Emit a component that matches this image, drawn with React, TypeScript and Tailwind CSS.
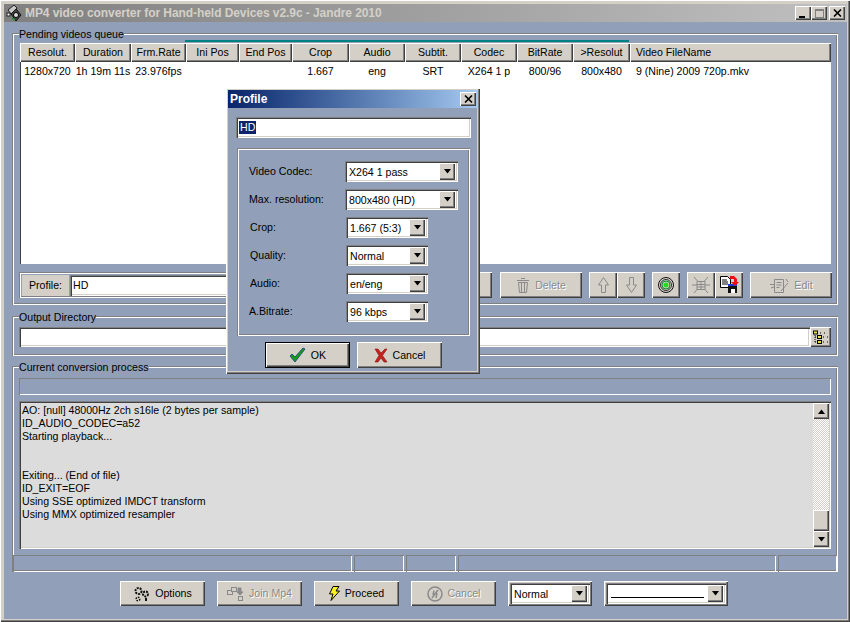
import type { ReactNode } from 'react';

const raised = 'bg-[#d4d0c8] shadow-[inset_1px_1px_0_#fff,inset_-1px_-1px_0_#404040,inset_-2px_-2px_0_#808080]';
const sunken = 'shadow-[inset_1px_1px_0_#808080,inset_2px_2px_0_#404040,inset_-1px_-1px_0_#fff,inset_-2px_-2px_0_#d4d0c8]';
const etched = 'shadow-[inset_1px_1px_0_#808080,inset_2px_2px_0_#fff,inset_-1px_-1px_0_#fff,inset_-2px_-2px_0_#808080]';
const thinPanel = 'shadow-[inset_1px_1px_0_#808080,inset_-1px_-1px_0_#fff]';
const disabledText = 'text-[#8a8a8a] [text-shadow:1px_1px_0_#fff]';

const columns = [
    { title: 'Resolut.', value: '1280x720', cls: 'w-[55px]' },
    { title: 'Duration', value: '1h 19m 11s', cls: 'w-[56px]' },
    { title: 'Frm.Rate', value: '23.976fps', cls: 'w-[55px]' },
    { title: 'Ini Pos', value: '', cls: 'w-[53px]' },
    { title: 'End Pos', value: '', cls: 'w-[53px]' },
    { title: 'Crop', value: '1.667', cls: 'w-[57px]' },
    { title: 'Audio', value: 'eng', cls: 'w-[56px]' },
    { title: 'Subtit.', value: 'SRT', cls: 'w-[56px]' },
    { title: 'Codec', value: 'X264 1 p', cls: 'w-[56px]' },
    { title: 'BitRate', value: '800/96', cls: 'w-[56px]' },
    { title: '>Resolut', value: '800x480', cls: 'w-[57px]' },
];

const logLines = [
    'AO: [null] 48000Hz 2ch s16le (2 bytes per sample)',
    'ID_AUDIO_CODEC=a52',
    'Starting playback...',
    '',
    '',
    'Exiting... (End of file)',
    'ID_EXIT=EOF',
    'Using SSE optimized IMDCT transform',
    'Using MMX optimized resampler',
];

function Arrow({ up }: { up?: boolean }) {
    return (
        <svg width="9" height="5" viewBox="0 0 9 5" className={up ? 'rotate-180' : ''}>
            <polygon points="1,0 8,0 4.5,4.5" fill="#000" />
        </svg>
    );
}

function Group({ label, className, children }: { label: string; className: string; children: ReactNode }) {
    return (
        <div className={`relative ${etched} ${className}`}>
            <span className="absolute left-[7px] -top-[5px] bg-[#919fb8] leading-[13px]">{label}</span>
            {children}
        </div>
    );
}

function Combo({ value, className }: { value: string; className: string }) {
    return (
        <div className={`flex items-center bg-white p-[2px] pr-[3px] ${sunken} ${className}`}>
            <span className="flex-1 pl-[2px] pt-[1px] text-black">{value}</span>
            <span className={`flex h-[17px] w-[16px] items-center justify-center ${raised}`}>
                <Arrow />
            </span>
        </div>
    );
}

function Button({ icon, label, disabled, className }: { icon: ReactNode; label: string; disabled?: boolean; className: string }) {
    return (
        <button className={`flex items-center justify-center gap-[5px] ${raised} ${disabled ? disabledText : 'text-black'} ${className}`}>
            {icon}
            {label}
        </button>
    );
}

function IconButton({ children, className }: { children: ReactNode; className?: string }) {
    return <button className={`flex h-[26px] w-[28px] items-center justify-center ${raised} ${className ?? ''}`}>{children}</button>;
}

function WinButton({ children }: { children: ReactNode }) {
    return <span className={`flex h-[14px] w-[16px] items-center justify-center ${raised}`}>{children}</span>;
}

function CloseGlyph() {
    return (
        <svg width="9" height="8" viewBox="0 0 9 8">
            <path d="M1 .5l7 7M8 .5l-7 7" stroke="#000" strokeWidth="1.600" />
        </svg>
    );
}

function AppIcon() {
    return (
        <svg width="18" height="18" viewBox="0 0 18 18">
            <path d="M3 6l6-5 3 3-6 6z" fill="#c8c8c8" stroke="#222" />
            <path d="M6 10l5-5 5 6-5 6z" fill="#444" stroke="#111" />
            <circle cx="11" cy="11" r="2.5" fill="#ddd" stroke="#000" />
            <rect x="2" y="9" width="3" height="3" fill="#fff" stroke="#222" />
            <path d="M7 14l3 2" stroke="#2a8a3a" strokeWidth="2" />
        </svg>
    );
}

function CheckIcon() {
    return (
        <svg width="17" height="16" viewBox="0 0 17 16">
            <path d="M1 9l2-2 3 3 8-9 2 1-10 13z" fill="#1b9a1b" stroke="#0a3f7a" strokeWidth="0.8" />
        </svg>
    );
}

function CrossIcon() {
    return (
        <svg width="14" height="15" viewBox="0 0 14 15">
            <path d="M1 1h3l3 4 4-4h2L8.500 7.500 13 14h-3L7 10l-3 4H1l4-6.500z" fill="#c8201c" stroke="#7a1410" strokeWidth="0.6" />
        </svg>
    );
}

function TrashIcon() {
    return (
        <svg width="14" height="16" viewBox="0 0 14 16" fill="none" stroke="#8a8a8a">
            <path d="M5 1.500h4M1 3.500h12M2.500 5.500h9l-1 10h-7zM5.500 6v9M8.500 6v9" />
        </svg>
    );
}

function UpDownIcon({ down }: { down?: boolean }) {
    return (
        <svg width="11" height="16" viewBox="0 0 11 16" fill="#d4d0c8" stroke="#8a8a8a" className={down ? 'rotate-180' : ''}>
            <path d="M5.500 .5L10.500 8H7.500v7.500h-4V8h-3z" />
        </svg>
    );
}

function TargetIcon() {
    return (
        <svg width="16" height="16" viewBox="0 0 16 16" fill="none">
            <circle cx="8" cy="8" r="7.500" stroke="#111" />
            <circle cx="8" cy="8" r="5.500" stroke="#333" />
            <circle cx="8" cy="8" r="4" stroke="#0a8a2a" />
            <circle cx="8" cy="8" r="2.500" fill="#22dd22" />
        </svg>
    );
}

function BugIcon() {
    return (
        <svg width="18" height="18" viewBox="0 0 18 18" fill="none" stroke="#8a8a8a">
            <path d="M5 5.500h8v8H5zM5 8.500h8M5 11h8M9 5.500v8M2 1l3.500 4M16 1l-3.500 4M0 9h5M18 9h-5M2 17l3.500-4M16 17l-3.500-4" />
        </svg>
    );
}

function SaveIcon() {
    return (
        <svg width="19" height="18" viewBox="0 0 19 18">
            <path d="M.5 .5h7l3 3v8h-10z" fill="#fff" stroke="#000" />
            <path d="M2 4h5M2 6h6M2 8h6" stroke="#000" />
            <rect x="8" y="9" width="9" height="8" fill="#111" />
            <rect x="8" y="8" width="9" height="2" fill="#1a3ad8" />
            <rect x="11" y="13" width="4" height="4" fill="#fff" />
            <path d="M10 0h4l3 3v3h2l-4 4-4-4h3V3h-4z" fill="#e81010" />
        </svg>
    );
}

function EditIcon() {
    return (
        <svg width="20" height="18" viewBox="0 0 20 18" fill="none" stroke="#8a8a8a">
            <path d="M5.500 3.500h9v13h-9zM7.500 6.500h5M7.500 9h5M7.500 11.500h3M1 8.500h4M2 12l3-1M12 15l7-8M17 3l2 3" />
        </svg>
    );
}

function TreeIcon() {
    return (
        <svg width="15" height="15" viewBox="0 0 15 15" fill="none">
            <path d="M2 3v9M2 7h3M2 12h3M7 3h2M11 3h2M10 7h2M14 7h1M10 12h2M14 12h1" stroke="#000" strokeDasharray="1 1" />
            <rect x=".5" y="1" width="4" height="3" fill="#f0e040" stroke="#000" />
            <rect x="4.500" y="5.500" width="4" height="3" fill="#f0e040" stroke="#000" />
            <rect x="4.500" y="10.500" width="4" height="3" fill="#f0e040" stroke="#000" />
        </svg>
    );
}

function GearsIcon() {
    return (
        <svg width="17" height="16" viewBox="0 0 17 16" fill="none" stroke="#111">
            <circle cx="5.500" cy="5" r="3" strokeWidth="2" strokeDasharray="2 1" />
            <circle cx="12.500" cy="8" r="2.500" strokeWidth="2" strokeDasharray="2 1" />
            <circle cx="5" cy="13" r="1.800" strokeWidth="1.500" strokeDasharray="1.500 1" />
            <path d="M13 12v3" strokeWidth="2" />
        </svg>
    );
}

function JoinIcon() {
    return (
        <svg width="17" height="16" viewBox="0 0 17 16" fill="#d4d0c8" stroke="#8a8a8a">
            <rect x=".5" y="4.500" width="5" height="4" />
            <rect x="4.500" y="1.500" width="5" height="4" />
            <rect x="11.500" y="10.500" width="4" height="4" />
            <path d="M11 2h3v4h2l-3 3-3-3h1z" fill="#8a8a8a" />
        </svg>
    );
}

function BoltIcon() {
    return (
        <svg width="11" height="15" viewBox="0 0 11 15">
            <path d="M4 .5h6L7 5h3.500L2 14.500 4 8H.5z" fill="#f8f020" stroke="#000" />
        </svg>
    );
}

function CancelIcon() {
    return (
        <svg width="16" height="16" viewBox="0 0 16 16" fill="none" stroke="#8a8a8a">
            <circle cx="8" cy="8" r="7" strokeWidth="1.500" />
            <path d="M5 12l6-8M7 4.500L6 9M10 7l-1 5" strokeWidth="1.500" />
        </svg>
    );
}

export default function App() {
    return (
        <div
            className={`relative flex h-[622px] w-[850px] flex-col text-[10.6px] leading-[13px] text-black ${raised}`}
            style={{ fontFamily: '"Liberation Sans", Arial, sans-serif' }}
        >
            {/* outer frame */}
            <div className="m-[4px] mb-[3px] mr-[3px] flex flex-1 flex-col">
                <div className="flex h-[18px] items-center bg-gradient-to-r from-[#808080] to-[#c0c0c0] pl-[1px] pr-[2px]">
                    <AppIcon />
                    <span className="ml-[2px] flex-1 text-[12px] font-bold tracking-[-0.07px] text-[#d4d0c8]">
                        MP4 video converter for Hand-held Devices v2.9c - Jandre 2010
                    </span>
                    <WinButton>
                        <span className="mt-[7px] mr-[3px] h-[2px] w-[6px] bg-black" />
                    </WinButton>
                    <WinButton>
                        <span className="h-[9px] w-[9px] border border-[#808080] border-t-2" />
                    </WinButton>
                    <span className="ml-[2px]">
                        <WinButton><CloseGlyph /></WinButton>
                    </span>
                </div>

                <div className="flex flex-1 flex-col bg-[#919fb8] px-[8px] pt-[11px]">
                    <Group label="Pending videos queue" className="h-[272px] w-[826px] px-[8px] pt-[10px]">
                        <div className="relative w-[811px]">
                            <div className="absolute -top-[3px] left-[165px] h-[2px] w-[444px] bg-[#008080]" />
                            <div className="flex h-[19px]">
                                {columns.map((c) => (
                                    <div key={c.title} className={`flex items-center justify-center ${raised} ${c.cls}`}>
                                        {c.title}
                                    </div>
                                ))}
                                <div className={`flex flex-1 items-center pl-[6px] ${raised}`}>Video FileName</div>
                            </div>
                            <div className="h-[202px] bg-white pt-[2px] shadow-[inset_1px_0_0_#404040]">
                                <div className="flex pt-[1px]">
                                    {columns.map((c) => (
                                        <div key={c.title} className={`whitespace-nowrap text-center ${c.cls}`}>
                                            {c.value}
                                        </div>
                                    ))}
                                    <div className="pl-[6px]">9 (Nine) 2009 720p.mkv</div>
                                </div>
                            </div>
                        </div>

                        <div className="mt-[8px] -ml-px flex h-[26px] w-[813px]">
                            <div className={`flex h-[26px] w-[381px] items-center p-[3px] ${etched}`}>
                                <span className="flex h-[21px] w-[47px] items-center justify-center bg-[#d4d0c8]">Profile:</span>
                                <span className={`ml-px flex h-[21px] flex-1 items-center bg-white pl-[3px] ${sunken}`}>HD</span>
                            </div>
                            <Button icon={null} label="" className="ml-[10px] h-[26px] w-[82px]" />
                            <Button icon={<TrashIcon />} label="Delete" disabled className="ml-[8px] h-[26px] w-[82px]" />
                            <IconButton className="ml-[7px]"><UpDownIcon /></IconButton>
                            <IconButton><UpDownIcon down /></IconButton>
                            <IconButton className="ml-[7px]"><TargetIcon /></IconButton>
                            <IconButton className="ml-[7px]"><BugIcon /></IconButton>
                            <IconButton><SaveIcon /></IconButton>
                            <Button icon={<EditIcon />} label="Edit" disabled className="ml-[7px] h-[26px] w-[82px]" />
                        </div>
                    </Group>

                    <Group label="Output Directory" className="mt-[11px] flex h-[40px] w-[826px] pl-[7px] pt-[11px]">
                        <div className={`h-[20px] w-[791px] bg-white ${sunken}`} />
                        <button className={`flex h-[20px] w-[21px] items-center justify-center ${raised}`}>
                            <TreeIcon />
                        </button>
                    </Group>

                    <Group label="Current conversion process" className="mt-[10px] h-[206px] w-[826px] px-[7px] pt-[12px]">
                        <div className={`h-[17px] w-[812px] ${thinPanel}`} />
                        <div className={`mt-[6px] flex h-[148px] w-[812px] bg-[#dcdcdc] p-[2px] ${sunken}`}>
                            <div className="flex-1 pl-[1px] pt-[1px]">
                                {logLines.map((line, i) => (
                                    <div key={i} className="h-[13px]">{line}</div>
                                ))}
                            </div>
                            <div className="flex w-[16px] flex-col">
                                <span className={`flex h-[16px] items-center justify-center ${raised}`}><Arrow up /></span>
                                <div className="flex-1 bg-[repeating-conic-gradient(#d4d0c8_0_25%,#fff_0_50%)] bg-[length:2px_2px]" />
                                <span className={`h-[21px] ${raised}`} />
                                <span className={`flex h-[16px] items-center justify-center ${raised}`}><Arrow /></span>
                            </div>
                        </div>
                        <div className="-mx-[6px] mt-[6px] flex h-[17px] gap-[2px]">
                            <div className={`w-[339px] ${thinPanel}`} />
                            <div className={`w-[50px] ${thinPanel}`} />
                            <div className={`w-[50px] ${thinPanel}`} />
                            <div className={`w-[318px] ${thinPanel}`} />
                            <div className={`w-[59px] ${thinPanel}`} />
                        </div>
                    </Group>

                    <div className="mt-[9px] flex h-[25px] pl-[108px]">
                        <Button icon={<GearsIcon />} label="Options" className="w-[85px]" />
                        <Button icon={<JoinIcon />} label="Join Mp4" disabled className="ml-[12px] w-[85px]" />
                        <Button icon={<BoltIcon />} label="Proceed" className="ml-[12px] w-[85px]" />
                        <Button icon={<CancelIcon />} label="Cancel" disabled className="ml-[12px] w-[85px]" />
                        <div className={`ml-[12px] w-[84px] p-[2px] ${raised}`}>
                            <Combo value="Normal" className="h-[21px]" />
                        </div>
                        <div className={`ml-[12px] w-[124px] p-[2px] ${raised}`}>
                            <div className={`flex h-[21px] items-center bg-white p-[2px] pr-[3px] ${sunken}`}>
                                <span className="ml-[3px] mt-[8px] h-px flex-1 bg-black mr-[3px]" />
                                <span className={`flex h-[17px] w-[16px] items-center justify-center ${raised}`}><Arrow /></span>
                            </div>
                        </div>
                    </div>
                </div>
            </div>

            {/* Profile dialog */}
            <div className={`absolute left-[226px] top-[88px] flex h-[286px] w-[254px] flex-col p-[2px] ${raised}`}>
                <div className="flex h-[18px] shrink-0 items-center justify-between bg-gradient-to-r from-[#0a246a] to-[#a6caf0] pl-[2px] pr-[2px]">
                    <span className="text-[12px] font-bold text-white">Profile</span>
                    <WinButton><CloseGlyph /></WinButton>
                </div>
                <div className="mr-px mb-px flex flex-1 flex-col bg-[#919fb8] pt-[9px]">
                    <div className={`ml-[8px] flex h-[21px] w-[235px] items-center bg-white pl-[3px] ${sunken}`}>
                        <span className="bg-[#0a246a] px-px text-white">HD</span>
                    </div>
                    <div className={`ml-[9px] mt-[10px] flex h-[188px] w-[233px] flex-col gap-[7px] pl-[12px] pt-[13px] ${etched}`}>
                        <div className="flex h-[21px] items-center">
                            <span className="w-[96px]">Video Codec:</span>
                            <Combo value="X264 1 pass" className="h-[21px] w-[113px]" />
                        </div>
                        <div className="flex h-[21px] items-center">
                            <span className="w-[96px]">Max. resolution:</span>
                            <Combo value="800x480 (HD)" className="h-[21px] w-[113px]" />
                        </div>
                        <div className="flex h-[21px] items-center">
                            <span className="w-[97px] pl-px">Crop:</span>
                            <Combo value="1.667 (5:3)" className="h-[21px] w-[82px]" />
                        </div>
                        <div className="flex h-[21px] items-center">
                            <span className="w-[97px] pl-px">Quality:</span>
                            <Combo value="Normal" className="h-[21px] w-[82px]" />
                        </div>
                        <div className="flex h-[21px] items-center">
                            <span className="w-[97px] pl-px">Audio:</span>
                            <Combo value="en/eng" className="h-[21px] w-[82px]" />
                        </div>
                        <div className="flex h-[21px] items-center">
                            <span className="w-[97px]">A.Bitrate:</span>
                            <Combo value="96 kbps" className="h-[21px] w-[82px]" />
                        </div>
                    </div>
                    <div className="ml-[37px] mt-[6px] flex gap-[7px]">
                        <Button icon={<CheckIcon />} label="OK" className="h-[26px] w-[85px] border border-black" />
                        <Button icon={<CrossIcon />} label="Cancel" className="h-[26px] w-[85px]" />
                    </div>
                </div>
            </div>
        </div>
    );
}
